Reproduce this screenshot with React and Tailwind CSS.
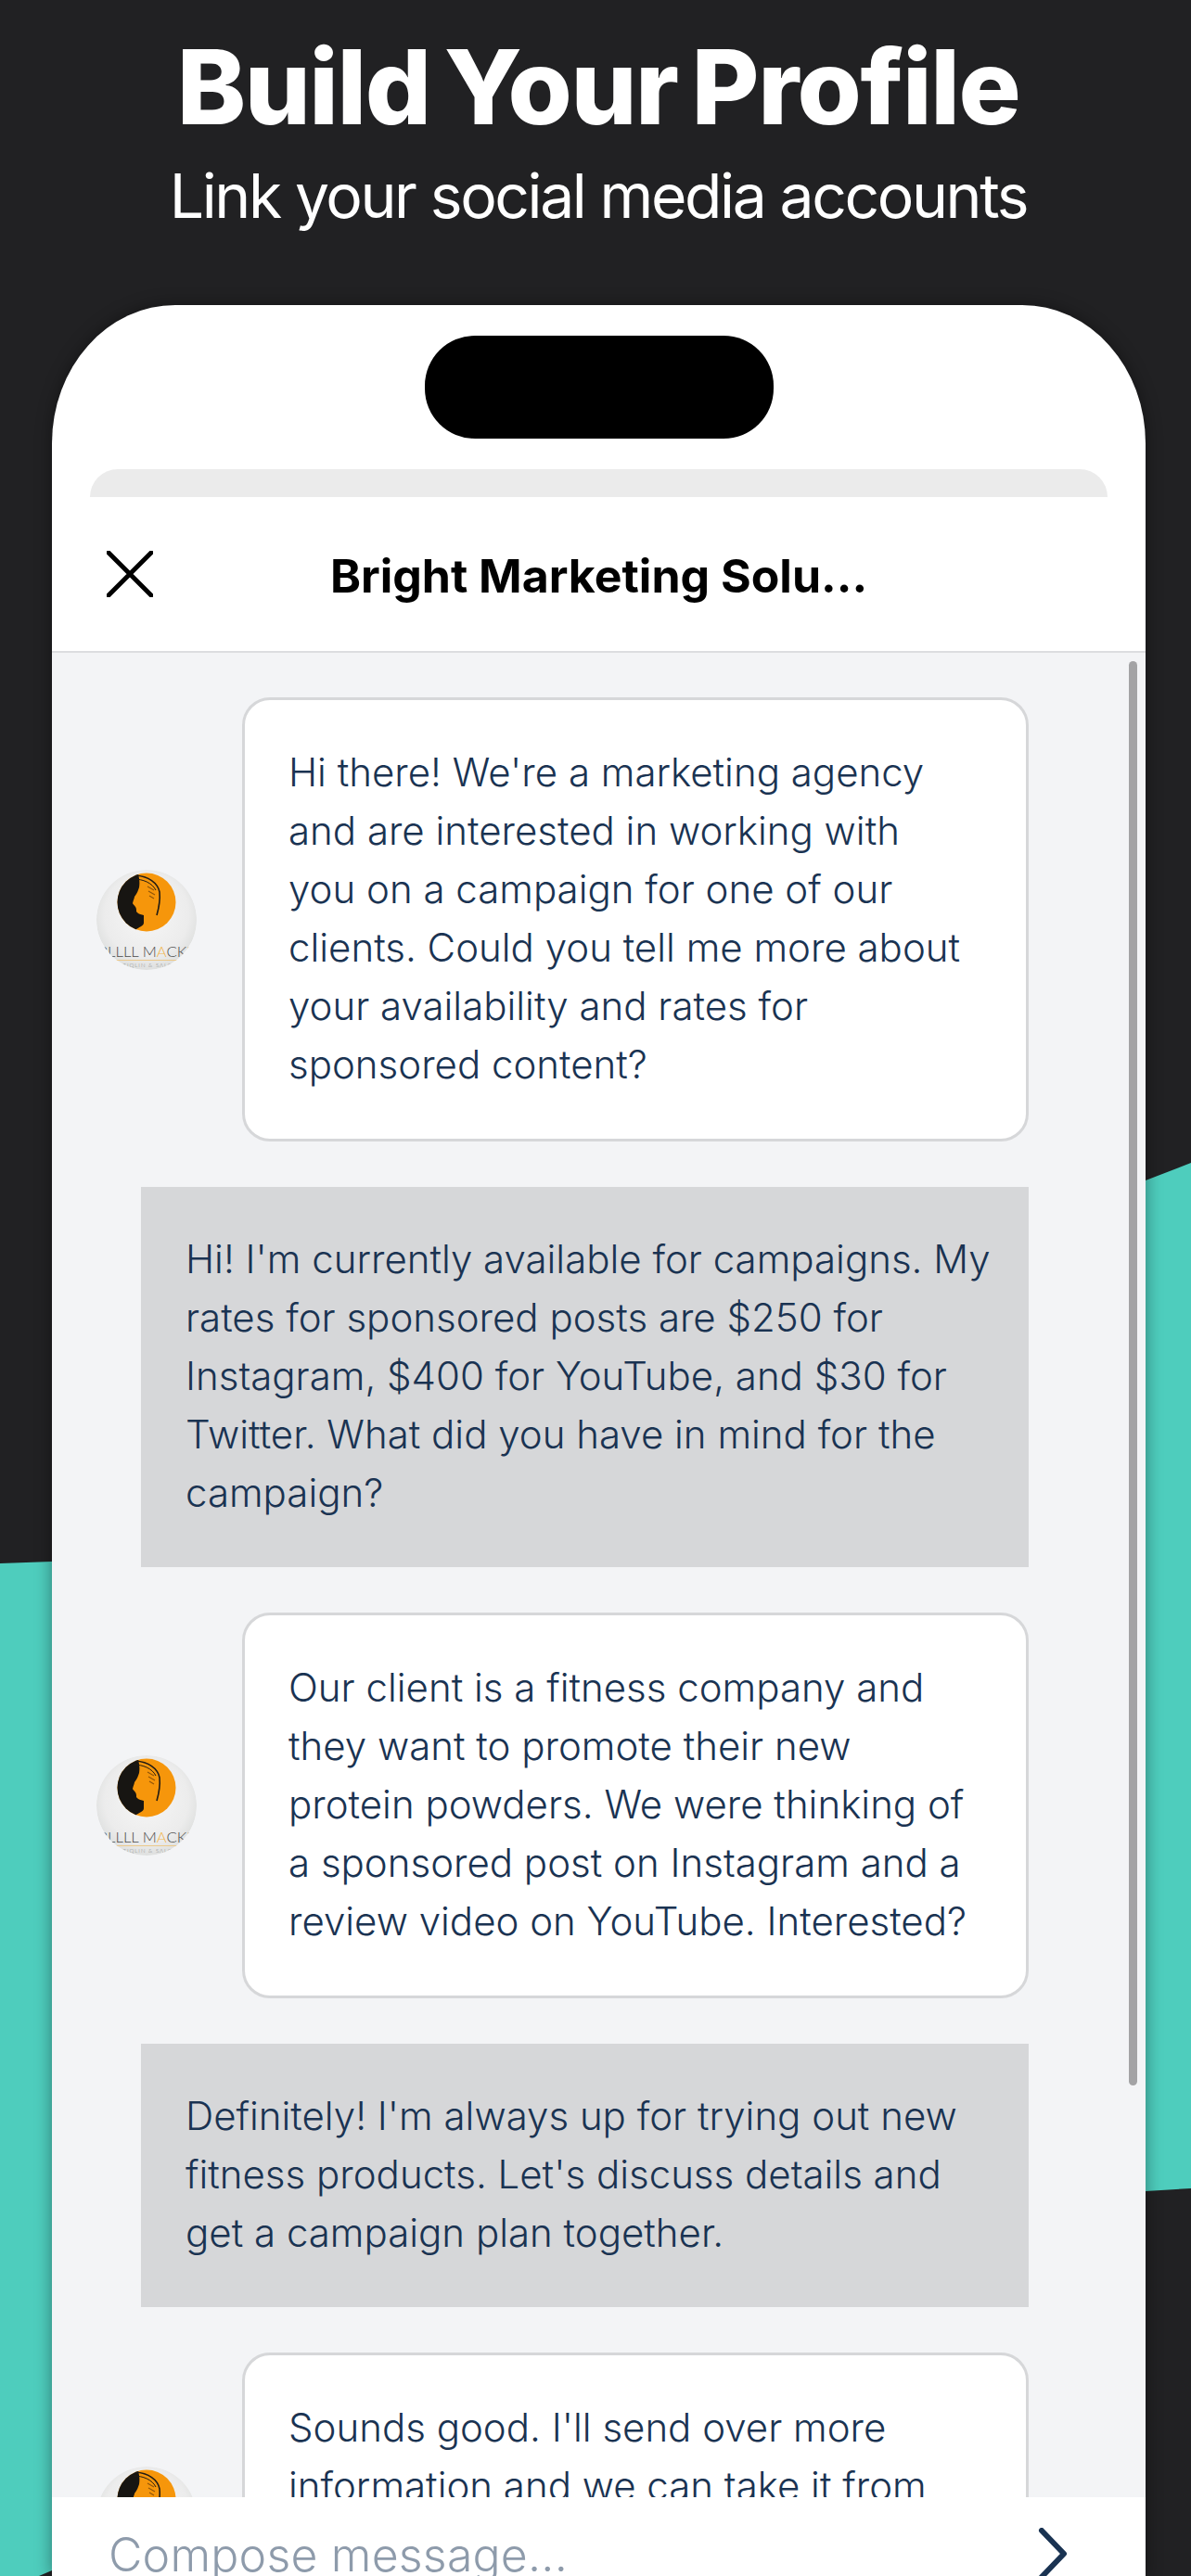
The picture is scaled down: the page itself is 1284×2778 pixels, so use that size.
const Avatar = () => (
  <svg viewBox="0 0 108 108" className="w-[108px] h-[108px] shrink-0 rounded-full">
    <defs>
      <radialGradient id="disc" cx="50%" cy="45%" r="60%">
        <stop offset="0%" stopColor="#f6f6f6" />
        <stop offset="70%" stopColor="#ececec" />
        <stop offset="100%" stopColor="#d9dbda" />
      </radialGradient>
      <clipPath id="mark">
        <circle cx="54" cy="35" r="31.5" />
      </clipPath>
    </defs>
    <circle cx="54" cy="54" r="54" fill="url(#disc)" />
    <circle cx="54" cy="35" r="31.5" fill="#f6960b" />
    <g clipPath="url(#mark)">
      {/* black side of the mark, its right edge is the face profile */}
      <path d="M44 0 L0 0 L0 70 L43 70 L43 64 C48 61 51 60 51 57 L51 49 C47 48 44 47 43 45 C43 43 43 41 42 40 C41 38 39 37 39 36 C40 32 41 30 41 29 C44 25 45 22 46 19 C47 13 46 8 44 0 Z" fill="#171512" />
      <path d="M42 6 C56 7 66 14 68 24 C69 34 67 42 65 49" fill="none" stroke="#211c15" strokeWidth="1.6" />
      <path d="M40 10 C50 10 60 14 64 22" fill="none" stroke="#211c15" strokeWidth="1" />
      <path d="M55 18 L62 22 M56 23 L63 27 M57 28 L62 31" stroke="#8f5409" strokeWidth="1.1" />
    </g>
    <text x="54" y="94" textAnchor="middle" fontFamily="Lato, sans-serif" fontSize="16" textLength="104" lengthAdjust="spacingAndGlyphs" fill="#4c4c4c">
      RLLLL M<tspan fill="#f0b64f">A</tspan>CKII
    </text>
    <rect x="20" y="97" width="68" height="1" fill="#ecc98a" />
    <text x="54" y="105" textAnchor="middle" fontFamily="Lato, sans-serif" fontSize="6" letterSpacing="1" fill="#8a8a8a">
      TATIQLIN &amp; SALON
    </text>
  </svg>
);

const Incoming = ({ children, minHeight = "" }) => (
  <div className="flex items-center gap-[49px] pl-[48px]">
    <Avatar />
    <div className={`w-[848px] shrink-0 bg-white border-[3px] border-[#d6d7d9] rounded-[30px] pl-[47px] pr-[59px] pt-[46px] pb-[49px] ${minHeight}`}>
      {children}
    </div>
  </div>
);

const Outgoing = ({ children }) => (
  <div className="ml-[96px] w-[957px] bg-[#d6d7d9] pl-[48px] pr-[40px] pt-[46px] pb-[49px]">{children}</div>
);

export default function App() {
  return (
    <div className="relative h-[2778px] w-[1284px] overflow-hidden bg-[#212123] font-['Inter',sans-serif]">
      {/* teal swoosh behind the phone */}
      <svg viewBox="0 0 1284 2778" className="absolute inset-0 w-[1284px] h-[2778px]">
        <polygon points="0,1686 56,1684 1235,1273 1284,1254 1284,2360 1235,2363 56,2772 42,2778 0,2778" fill="#4ecdbd" />
      </svg>

      <div className="relative flex flex-col h-full">
        <div className="h-[329px] shrink-0 text-center text-white pl-[6px]">
          <h1 className="pt-[28px] text-[112px] leading-[130px] font-extrabold tracking-[-1.5px] [word-spacing:-8px]">Build Your Profile</h1>
          <p className="mt-[13px] text-[66px] leading-[80px] font-normal tracking-[-2.4px]">Link your social media accounts</p>
        </div>

        <div className="relative ml-[56px] w-[1179px] flex-1 min-h-0 flex flex-col bg-white rounded-tl-[133px_149px] rounded-tr-[133px_149px] shadow-[0_0_18px_rgba(0,0,0,0.4)] overflow-hidden">
          <div className="mt-[33px] mx-auto w-[376px] h-[111px] shrink-0 rounded-[54px] bg-black" />
          <div className="mt-[33px] mx-[41px] h-[30px] shrink-0 rounded-t-[30px] bg-[#ebebeb]" />

          <div className="h-[168px] shrink-0 grid grid-cols-[1fr_auto_1fr] items-center border-b-2 border-[#dcdde0] px-[59px]">
            <svg viewBox="0 0 50 50" className="w-[50px] h-[50px]" fill="none" stroke="#000" strokeWidth="5" strokeLinecap="round">
              <path d="M2 2 L48 48 M48 2 L2 48" />
            </svg>
            <h2 className="pt-[3px] text-[50px] leading-[64px] font-bold text-black">Bright Marketing Solu...</h2>
            <div />
          </div>

          <div className="relative flex-1 min-h-0 overflow-hidden bg-[#f3f4f6] text-[42px] leading-[63px] font-light text-[#1a3352]">
            <div className="flex flex-col gap-[49px] pt-[48px]">
              <Incoming>Hi there! We're a marketing agency and are interested in working with you on a campaign for one of our clients. Could you tell me more about your availability and rates for sponsored content?</Incoming>
              <Outgoing>Hi! I'm currently available for campaigns. My rates for sponsored posts are $250 for Instagram, $400 for YouTube, and $30 for Twitter. What did you have in mind for the campaign?</Outgoing>
              <Incoming>Our client is a fitness company and they want to promote their new protein powders. We were thinking of a sponsored post on Instagram and a review video on YouTube. Interested?</Incoming>
              <Outgoing>Definitely! I'm always up for trying out new fitness products. Let's discuss details and get a campaign plan together.</Outgoing>
              <Incoming minHeight="min-h-[354px]">Sounds good. I'll send over more information and we can take it from</Incoming>
            </div>
            <div className="absolute left-[1161px] top-[9px] w-[9px] h-[1536px] rounded-full bg-[#a3a3a5]" />
          </div>

          <div className="h-[85px] shrink-0 flex items-start justify-between bg-white pl-[61px] pr-[84px]">
            <span className="mt-[31px] text-[50px] leading-[62px] font-light text-[#8e9bab] tracking-[0.2px]">Compose message...</span>
            <svg viewBox="0 0 32 56" className="mt-[33px] w-[32px] h-[56px] shrink-0" fill="none" stroke="#1a3352" strokeWidth="6" strokeLinecap="round" strokeLinejoin="round">
              <path d="M4 3 L28 28 L4 53" />
            </svg>
          </div>
        </div>
      </div>
    </div>
  );
}
